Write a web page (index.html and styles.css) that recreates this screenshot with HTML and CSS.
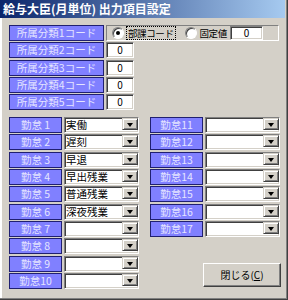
FILE: index.html
```html
<!DOCTYPE html>
<html lang="ja">
<head>
    <meta charset="UTF-8">
    <title>出力項目設定</title>
    <link rel="stylesheet" href="styles.css">
</head>
<body>
    <div class="window">
        <div class="titlebar">給与大臣(月単位) 出力項目設定</div>

        <div class="dialog">
            <!-- 所属分類コード -->
            <div class="codes">
                <div class="code-row">
                    <div class="tag tag-wide">所属分類1コード</div>
                    <div class="radio-group">
                        <span class="radio"><span class="dot checked"></span><span class="focus">部課コード</span></span>
                        <span class="radio"><span class="dot"></span>固定値</span>
                        <div class="field field-fixed">0</div>
                    </div>
                </div>
                <div class="code-row">
                    <div class="tag tag-wide">所属分類2コード</div>
                    <div class="field field-code">0</div>
                </div>
                <div class="code-row">
                    <div class="tag tag-wide">所属分類3コード</div>
                    <div class="field field-code">0</div>
                </div>
                <div class="code-row">
                    <div class="tag tag-wide">所属分類4コード</div>
                    <div class="field field-code">0</div>
                </div>
                <div class="code-row">
                    <div class="tag tag-wide">所属分類5コード</div>
                    <div class="field field-code">0</div>
                </div>
            </div>

            <!-- 勤怠項目 -->
            <div class="kintai">
                <div class="kintai-col">
                    <div class="tag">勤怠 1</div><div class="combo"><span class="combo-text">実働</span><span class="combo-btn"></span></div>
                    <div class="tag">勤怠 2</div><div class="combo"><span class="combo-text">遅刻</span><span class="combo-btn"></span></div>
                    <div class="tag">勤怠 3</div><div class="combo"><span class="combo-text">早退</span><span class="combo-btn"></span></div>
                    <div class="tag">勤怠 4</div><div class="combo"><span class="combo-text">早出残業</span><span class="combo-btn"></span></div>
                    <div class="tag">勤怠 5</div><div class="combo"><span class="combo-text">普通残業</span><span class="combo-btn"></span></div>
                    <div class="tag">勤怠 6</div><div class="combo"><span class="combo-text">深夜残業</span><span class="combo-btn"></span></div>
                    <div class="tag">勤怠 7</div><div class="combo"><span class="combo-text"></span><span class="combo-btn"></span></div>
                    <div class="tag">勤怠 8</div><div class="combo"><span class="combo-text"></span><span class="combo-btn"></span></div>
                    <div class="tag">勤怠 9</div><div class="combo"><span class="combo-text"></span><span class="combo-btn"></span></div>
                    <div class="tag">勤怠10</div><div class="combo"><span class="combo-text"></span><span class="combo-btn"></span></div>
                </div>
                <div class="kintai-right">
                    <div class="kintai-col">
                        <div class="tag">勤怠11</div><div class="combo"><span class="combo-text"></span><span class="combo-btn"></span></div>
                        <div class="tag">勤怠12</div><div class="combo"><span class="combo-text"></span><span class="combo-btn"></span></div>
                        <div class="tag">勤怠13</div><div class="combo"><span class="combo-text"></span><span class="combo-btn"></span></div>
                        <div class="tag">勤怠14</div><div class="combo"><span class="combo-text"></span><span class="combo-btn"></span></div>
                        <div class="tag">勤怠15</div><div class="combo"><span class="combo-text"></span><span class="combo-btn"></span></div>
                        <div class="tag">勤怠16</div><div class="combo"><span class="combo-text"></span><span class="combo-btn"></span></div>
                        <div class="tag">勤怠17</div><div class="combo"><span class="combo-text"></span><span class="combo-btn"></span></div>
                    </div>
                    <button class="close-btn">閉じる(<u>C</u>)</button>
                </div>
            </div>
        </div>
    </div>
</body>
</html>
```

FILE: styles.css
```css
* {
  box-sizing: border-box;
}

body {
  margin: 0;
  font-family: "Noto Sans CJK JP", "DejaVu Sans", sans-serif;
  font-size: 10px;
}

/* Fenêtre */
.window {
  width: 288px;
  height: 300px;
  background: #d4d0c8;
  box-shadow: inset -1px -1px #404040, inset -2px -2px #808080, inset 2px 0 #ffffff;
  overflow: hidden;
}

.titlebar {
  height: 18px;
  margin-right: 3px;
  padding: 0 3px;
  background: linear-gradient(to right, #0a246a, #a6caf0);
  color: #ffffff;
  font-size: 12px;
  font-weight: bold;
  line-height: 18px;
  white-space: nowrap;
}

.dialog {
  padding: 7px 0 0 9px;
}

/* Étiquettes bleues */
.tag {
  height: 16px;
  background: #8080ff;
  border: 1px solid #202070;
  color: #e4e4ff;
  font-size: 10.5px;
  text-align: center;
  line-height: 14px;
  white-space: nowrap;
}

.tag-wide {
  width: 95px;
}

/* Champs enfoncés */
.field,
.combo {
  height: 16px;
  background: #ffffff;
  border-style: solid;
  border-width: 1px;
  border-color: #808080 #ffffff #ffffff #808080;
  box-shadow: inset 1px 1px #404040, inset -1px -1px #d4d0c8;
  line-height: 14px;
}

.field {
  text-align: center;
}

.codes {
  display: flex;
  flex-direction: column;
  gap: 1.25px;
}

.code-row {
  display: flex;
  gap: 2px;
}

.field-code {
  width: 28px;
}

.radio-group {
  width: 173px;
  height: 16px;
  display: flex;
  align-items: center;
  padding-left: 5px;
  border: 1px solid;
  border-color: #808080 #ffffff #ffffff #808080;
}

.radio {
  display: flex;
  align-items: center;
  gap: 3px;
  margin-right: 10px;
  font-size: 9.5px;
  letter-spacing: -0.4px;
  line-height: 12px;
  white-space: nowrap;
}

.radio + .radio {
  margin-right: 0;
}

.dot {
  width: 12px;
  height: 12px;
  border-radius: 50%;
  background: #ffffff;
  border: 1px solid;
  border-color: #808080 #ffffff #ffffff #808080;
  box-shadow: inset 1px 1px #404040;
  display: flex;
  align-items: center;
  justify-content: center;
}

.dot.checked::after {
  content: '';
  width: 4px;
  height: 4px;
  border-radius: 50%;
  background: #000000;
}

.focus {
  outline: 1px dotted #000000;
  outline-offset: 0;
  padding: 0 1px;
}

.field-fixed {
  flex-shrink: 0;
  width: 33px;
  height: 14px;
  margin-left: auto;
  margin-right: 15px;
  line-height: 12px;
}

/* Grille des 勤怠 */
.kintai {
  display: flex;
  gap: 11px;
  margin-top: 7px;
}

.kintai-col {
  display: grid;
  grid-template-columns: 53px 75px;
  grid-auto-rows: 16px;
  column-gap: 2px;
  row-gap: 1.33px;
}

.kintai-right {
  display: flex;
  flex-direction: column;
  align-items: flex-end;
}

.combo {
  display: flex;
  justify-content: space-between;
}

.combo-text {
  padding-left: 1px;
  font-size: 10.5px;
  white-space: nowrap;
}

.combo-btn {
  width: 16px;
  height: 12px;
  margin: 0 0 0 auto;
  background: #d4d0c8;
  border: 1px solid;
  border-color: #d4d0c8 #404040 #404040 #d4d0c8;
  box-shadow: inset 1px 1px #ffffff, inset -1px -1px #808080;
  position: relative;
}

.combo-btn::after {
  content: '';
  position: absolute;
  left: 4px;
  top: 4px;
  border-left: 3.5px solid transparent;
  border-right: 3.5px solid transparent;
  border-top: 4px solid #000000;
}

.close-btn {
  width: 78px;
  height: 24px;
  margin-top: 26px;
  margin-right: -1px;
  background: #d4d0c8;
  border: 1px solid;
  border-color: #ffffff #404040 #404040 #ffffff;
  box-shadow: inset -1px -1px #808080;
  font-family: inherit;
  font-size: 10px;
  color: #000000;
  padding: 0;
}
```
